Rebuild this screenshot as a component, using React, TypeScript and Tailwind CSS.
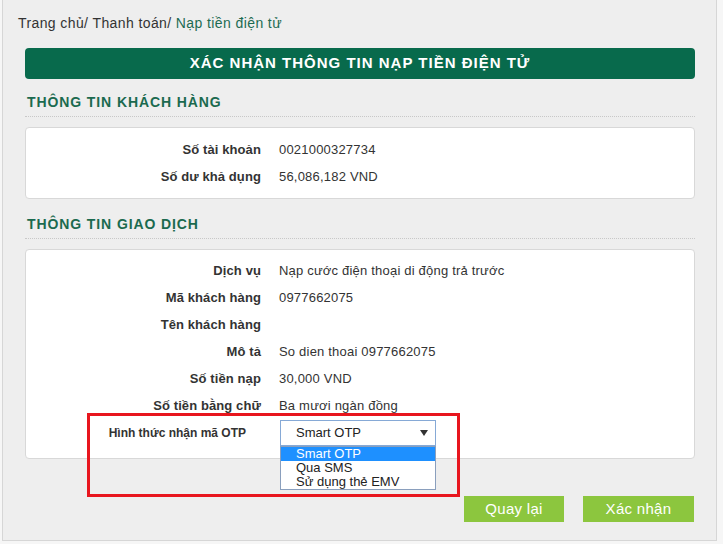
import React from "react";

const font = { fontFamily: '"Liberation Sans", Arial, sans-serif' };

function Row({ label, value }: { label: string; value?: string }) {
  return (
    <div className="flex h-[27px] items-center">
      <div className="w-[235px] shrink-0 text-right text-[13px] font-bold tracking-[0.1px] text-[#333]">{label}</div>
      <div className="pl-[18px] text-[13px] tracking-[0.2px] text-[#333]">{value}</div>
    </div>
  );
}

function Heading({ children, mt }: { children: React.ReactNode; mt: string }) {
  return (
    <div className={`${mt} border-b border-dotted border-[#c8c8c8] pb-[5px] pl-[2px] text-[14px] font-bold leading-[18px] tracking-[0.9px] text-[#1b6a4f]`}>
      {children}
    </div>
  );
}

export default function App() {
  return (
    <div style={font} className="relative h-[544px] w-[723px] overflow-hidden bg-[#f6f6f6]">
      <div className="ml-[2px] h-[541px] w-[715px] border-x border-b border-[#d6d6d6] bg-[#eeeeee] pl-[22px] pr-[21px] pt-[14px]">
        <div className="-ml-[7px] h-[18px] text-[14px] leading-[18px] tracking-[0.4px] text-[#333]">
          Trang chủ/ Thanh toán/ <span className="text-[#1d6b52]">Nạp tiền điện tử</span>
        </div>
        <div className="mt-[16px] flex h-[31px] items-center justify-center rounded-[4px] bg-[#086a4c] text-[15px] font-bold tracking-[1px] text-white">
          XÁC NHẬN THÔNG TIN NẠP TIỀN ĐIỆN TỬ
        </div>

        <Heading mt="mt-[14px]">THÔNG TIN KHÁCH HÀNG</Heading>
        <div className="mt-[10px] h-[72px] rounded-[4px] border border-[#d8d8d8] bg-white pt-[8px]">
          <Row label="Số tài khoản" value="0021000327734" />
          <Row label="Số dư khả dụng" value="56,086,182 VND" />
        </div>

        <Heading mt="mt-[16px]">THÔNG TIN GIAO DỊCH</Heading>
        <div className="mt-[10px] h-[210px] rounded-[4px] border border-[#d8d8d8] bg-white pt-[7px]">
          <Row label="Dịch vụ" value="Nạp cước điện thoại di động trả trước" />
          <Row label="Mã khách hàng" value="0977662075" />
          <Row label="Tên khách hàng" value="" />
          <Row label="Mô tả" value="So dien thoai 0977662075" />
          <Row label="Số tiền nạp" value="30,000 VND" />
          <Row label="Số tiền bằng chữ" value="Ba mươi ngàn đồng" />
          <div className="mt-[1px] flex">
            <div className="w-[235px] shrink-0 pr-[15px] pt-[4px] text-right text-[12px] font-bold text-[#333]">
              Hình thức nhận mã OTP
            </div>
            <div className="relative ml-[19px]">
              <div className="flex h-[26px] w-[156px] items-center justify-between border border-[#86a9d6] bg-white pl-[15px] pr-[7px] text-[13px] text-[#222]">
                <span>Smart OTP</span>
                <svg width="8" height="6" viewBox="0 0 8 6"><path d="M0 0h8L4 6z" fill="#333" /></svg>
              </div>
              <div className="absolute left-0 top-[26px] z-10 w-[156px] border border-[#8a9fbd] bg-white text-[13px] leading-[14px] text-[#222]">
                <div className="h-[14px] bg-[#1e90ff] pl-[15px] text-white">Smart OTP</div>
                <div className="h-[14px] pl-[15px]">Qua SMS</div>
                <div className="h-[14px] pl-[15px]">Sử dụng thẻ EMV</div>
              </div>
            </div>
          </div>
        </div>

        <div className="mr-[1px] mt-[37px] flex justify-end gap-[19px]">
          <div className="flex h-[26px] w-[100px] items-center justify-center bg-[#8cc63e] text-[15px] tracking-[0.3px] text-white">Quay lại</div>
          <div className="flex h-[26px] w-[111px] items-center justify-center bg-[#8cc63e] text-[15px] tracking-[0.3px] text-white">Xác nhận</div>
        </div>
      </div>
      <div className="absolute left-[87px] top-[413px] z-20 h-[84px] w-[373px] border-[3px] border-[#e8161e]" />
    </div>
  );
}
